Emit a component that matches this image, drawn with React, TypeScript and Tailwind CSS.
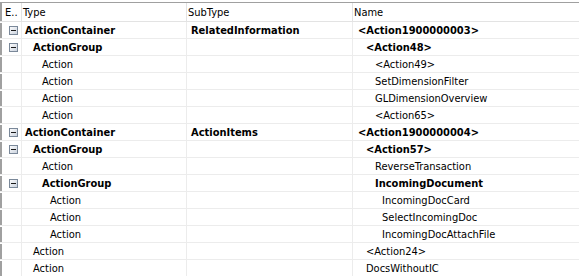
import React from "react";

type Row = {
  type: string;
  sub?: string;
  name: string;
  level: number; // indent level for type
  bold?: boolean;
  expand?: boolean;
};

const rows: Row[] = [
  { type: "ActionContainer", sub: "RelatedInformation", name: "<Action1900000003>", level: 0, bold: true, expand: true },
  { type: "ActionGroup", name: "<Action48>", level: 1, bold: true, expand: true },
  { type: "Action", name: "<Action49>", level: 2 },
  { type: "Action", name: "SetDimensionFilter", level: 2 },
  { type: "Action", name: "GLDimensionOverview", level: 2 },
  { type: "Action", name: "<Action65>", level: 2 },
  { type: "ActionContainer", sub: "ActionItems", name: "<Action1900000004>", level: 0, bold: true, expand: true },
  { type: "ActionGroup", name: "<Action57>", level: 1, bold: true, expand: true },
  { type: "Action", name: "ReverseTransaction", level: 2 },
  { type: "ActionGroup", name: "IncomingDocument", level: 2, bold: true, expand: true },
  { type: "Action", name: "IncomingDocCard", level: 3 },
  { type: "Action", name: "SelectIncomingDoc", level: 3 },
  { type: "Action", name: "IncomingDocAttachFile", level: 3 },
  { type: "Action", name: "<Action24>", level: 1 },
  { type: "Action", name: "DocsWithoutIC", level: 1 },
];

const typeIndent = ["pl-[3px]", "pl-[11px]", "pl-[20px]", "pl-[28px]"];
const nameIndent = ["pl-[5px]", "pl-[13px]", "pl-[22px]", "pl-[29px]"];

function MinusBox() {
  return (
    <svg width="9" height="9" viewBox="0 0 9 9" className="block">
      <defs>
        <linearGradient id="g" x1="0" y1="0" x2="1" y2="1">
          <stop offset="0" stopColor="#ffffff" />
          <stop offset="1" stopColor="#c8d0dc" />
        </linearGradient>
      </defs>
      <rect x="0.5" y="0.5" width="8" height="8" fill="url(#g)" stroke="#7a8899" />
      <rect x="2" y="4" width="5" height="1" fill="#1a1a1a" />
    </svg>
  );
}

export default function App() {
  return (
    <div
      className="w-[579px] h-[276px] overflow-hidden bg-white text-[11px] text-black"
      style={{ fontFamily: '"DejaVu Sans Condensed", "DejaVu Sans", sans-serif' }}
    >
      <div className="h-[2px]" />
      <div className="h-px bg-[#a0a0a0]" />
      {/* header */}
      <div className="flex h-[19px] border-b border-[#e3e3e3]">
        <div className="w-[3px] flex">
          <div className="w-[2px] bg-[#a0a0a0]" />
        </div>
        <div className="w-[19px] border-r border-[#e3e3e3] pl-[2px] pt-px leading-[18px]">E..</div>
        <div className="w-[165px] border-r border-[#e3e3e3] pl-px pt-px leading-[18px]">Type</div>
        <div className="w-[166px] border-r border-[#e3e3e3] pl-px pt-px leading-[18px]">SubType</div>
        <div className="flex-1 pl-px pt-px leading-[18px]">Name</div>
      </div>
      {rows.map((r, i) => (
        <div key={i} className="flex h-[17px] border-b border-[#ececec]">
          <div className="w-[3px] flex pt-px">
            <div className="w-[2px] bg-[#a0a0a0]" />
          </div>
          <div className="w-[19px] border-r border-[#ececec] flex items-center pl-[6px] pt-px">
            {r.expand ? <MinusBox /> : null}
          </div>
          <div
            className={`w-[165px] border-r border-[#ececec] pt-px leading-[15px] overflow-hidden whitespace-nowrap ${typeIndent[r.level]} ${r.bold ? "font-bold" : ""}`}
          >
            {r.type}
          </div>
          <div
            className={`w-[166px] border-r border-[#ececec] pt-px leading-[15px] overflow-hidden whitespace-nowrap pl-[4px] ${r.bold ? "font-bold" : ""}`}
          >
            {r.sub ?? ""}
          </div>
          <div
            className={`flex-1 pt-px leading-[15px] overflow-hidden whitespace-nowrap ${nameIndent[r.level]} ${r.bold ? "font-bold" : ""}`}
          >
            {r.name}
          </div>
        </div>
      ))}
    </div>
  );
}
